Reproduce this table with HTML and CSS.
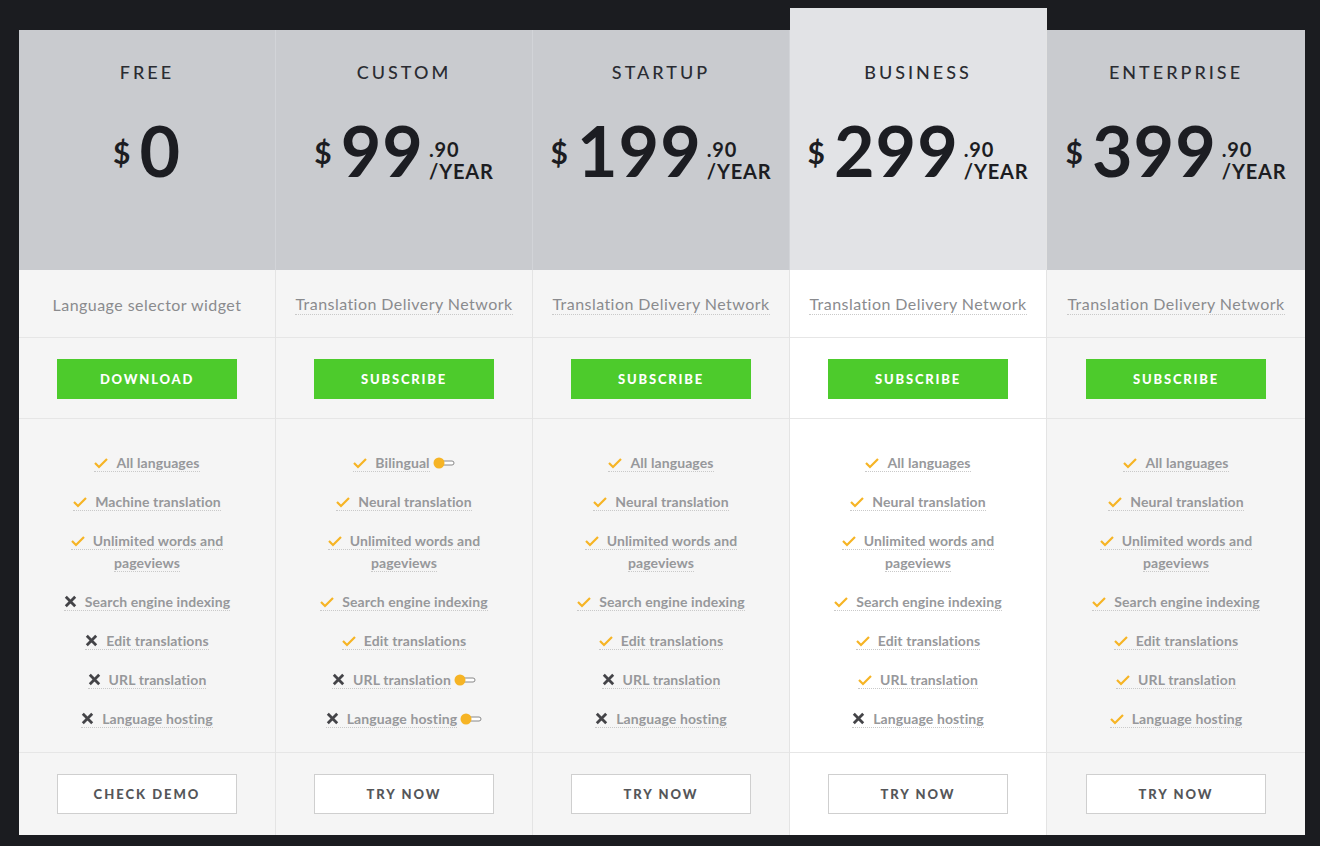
FILE: index.html
```html
<!DOCTYPE html>
<html>
<head>
<meta charset="utf-8">
<link rel="stylesheet" href="styles.css">
</head>
<body>
<div class="pricing">
  <div class="plan">
    <div class="head">
      <div class="name">FREE</div>
      <div class="price"><span class="cur">$</span><span class="amt">0</span></div>
    </div>
    <div class="desc"><span class="plain">Language selector widget</span></div>
    <div class="cta"><a class="btn-green">DOWNLOAD</a></div>
    <ul class="features">
      <li><span class="f"><i class="ok"></i>All languages</span></li>
      <li><span class="f"><i class="ok"></i>Machine translation</span></li>
      <li><span class="f"><i class="ok"></i>Unlimited words and pageviews</span></li>
      <li><span class="f"><i class="no"></i>Search engine indexing</span></li>
      <li><span class="f"><i class="no"></i>Edit translations</span></li>
      <li><span class="f"><i class="no"></i>URL translation</span></li>
      <li><span class="f"><i class="no"></i>Language hosting</span></li>
    </ul>
    <div class="foot"><a class="btn-line">CHECK DEMO</a></div>
  </div>

  <div class="plan">
    <div class="head">
      <div class="name">CUSTOM</div>
      <div class="price"><span class="cur">$</span><span class="amt">99</span><span class="suf"><span>.90</span><span>/YEAR</span></span></div>
    </div>
    <div class="desc"><span class="dl">Translation Delivery Network</span></div>
    <div class="cta"><a class="btn-green">SUBSCRIBE</a></div>
    <ul class="features">
      <li><span class="f"><i class="ok"></i>Bilingual</span><i class="tog"></i></li>
      <li><span class="f"><i class="ok"></i>Neural translation</span></li>
      <li><span class="f"><i class="ok"></i>Unlimited words and pageviews</span></li>
      <li><span class="f"><i class="ok"></i>Search engine indexing</span></li>
      <li><span class="f"><i class="ok"></i>Edit translations</span></li>
      <li><span class="f"><i class="no"></i>URL translation</span><i class="tog"></i></li>
      <li><span class="f"><i class="no"></i>Language hosting</span><i class="tog"></i></li>
    </ul>
    <div class="foot"><a class="btn-line">TRY NOW</a></div>
  </div>

  <div class="plan">
    <div class="head">
      <div class="name">STARTUP</div>
      <div class="price"><span class="cur">$</span><span class="amt">199</span><span class="suf"><span>.90</span><span>/YEAR</span></span></div>
    </div>
    <div class="desc"><span class="dl">Translation Delivery Network</span></div>
    <div class="cta"><a class="btn-green">SUBSCRIBE</a></div>
    <ul class="features">
      <li><span class="f"><i class="ok"></i>All languages</span></li>
      <li><span class="f"><i class="ok"></i>Neural translation</span></li>
      <li><span class="f"><i class="ok"></i>Unlimited words and pageviews</span></li>
      <li><span class="f"><i class="ok"></i>Search engine indexing</span></li>
      <li><span class="f"><i class="ok"></i>Edit translations</span></li>
      <li><span class="f"><i class="no"></i>URL translation</span></li>
      <li><span class="f"><i class="no"></i>Language hosting</span></li>
    </ul>
    <div class="foot"><a class="btn-line">TRY NOW</a></div>
  </div>

  <div class="plan featured">
    <div class="head">
      <div class="name">BUSINESS</div>
      <div class="price"><span class="cur">$</span><span class="amt">299</span><span class="suf"><span>.90</span><span>/YEAR</span></span></div>
    </div>
    <div class="desc"><span class="dl">Translation Delivery Network</span></div>
    <div class="cta"><a class="btn-green">SUBSCRIBE</a></div>
    <ul class="features">
      <li><span class="f"><i class="ok"></i>All languages</span></li>
      <li><span class="f"><i class="ok"></i>Neural translation</span></li>
      <li><span class="f"><i class="ok"></i>Unlimited words and pageviews</span></li>
      <li><span class="f"><i class="ok"></i>Search engine indexing</span></li>
      <li><span class="f"><i class="ok"></i>Edit translations</span></li>
      <li><span class="f"><i class="ok"></i>URL translation</span></li>
      <li><span class="f"><i class="no"></i>Language hosting</span></li>
    </ul>
    <div class="foot"><a class="btn-line">TRY NOW</a></div>
  </div>

  <div class="plan">
    <div class="head">
      <div class="name">ENTERPRISE</div>
      <div class="price"><span class="cur">$</span><span class="amt">399</span><span class="suf"><span>.90</span><span>/YEAR</span></span></div>
    </div>
    <div class="desc"><span class="dl">Translation Delivery Network</span></div>
    <div class="cta"><a class="btn-green">SUBSCRIBE</a></div>
    <ul class="features">
      <li><span class="f"><i class="ok"></i>All languages</span></li>
      <li><span class="f"><i class="ok"></i>Neural translation</span></li>
      <li><span class="f"><i class="ok"></i>Unlimited words and pageviews</span></li>
      <li><span class="f"><i class="ok"></i>Search engine indexing</span></li>
      <li><span class="f"><i class="ok"></i>Edit translations</span></li>
      <li><span class="f"><i class="ok"></i>URL translation</span></li>
      <li><span class="f"><i class="ok"></i>Language hosting</span></li>
    </ul>
    <div class="foot"><a class="btn-line">TRY NOW</a></div>
  </div>
</div>
</body>
</html>
```

FILE: styles.css
```css
* { box-sizing: border-box; }
html, body { margin: 0; padding: 0; }
body {
  background: #1b1c20;
  font-family: Lato, "Open Sans", sans-serif;
  width: 1320px;
  height: 846px;
  overflow: hidden;
}
.pricing {
  margin: 8px 0 0 19px;
  width: 1286px;
  display: grid;
  grid-template-columns: 257px 257px 257px 257px 258px;
  align-items: end;
}
.plan {
  display: flex;
  flex-direction: column;
  background: #f5f5f5;
  border-right: 1px solid #e4e4e4;
}
.plan:last-child { border-right: none; }
.plan.featured { background: #ffffff; }

.head {
  height: 240px;
  background: #c9cbcf;
  display: flex;
  flex-direction: column;
  align-items: center;
  padding-top: 32px;
  margin-right: -1px;
  border-right: 1px solid #d2d4d8;
}
.plan:last-child .head { margin-right: 0; border-right: none; }
.featured .head {
  height: 262px;
  background: #e2e3e6;
  padding-top: 54px;
  border-right: none;
  margin-right: 0;
}
.name {
  font-size: 18px;
  letter-spacing: 3px;
  color: #2a2c32;
  line-height: 20px;
  font-weight: 500;
}
.price {
  display: flex;
  align-items: flex-end;
  margin-top: 38px;
  color: #1c1d22;
}
.cur {
  font-size: 30px;
  font-weight: 700;
  line-height: 1;
  align-self: flex-start;
  margin-top: 17px;
  margin-right: 9px;
}
.amt {
  font-size: 70px;
  font-weight: 700;
  line-height: 60px;
  letter-spacing: 1px;
}
.suf {
  display: flex;
  flex-direction: column;
  font-size: 20px;
  font-weight: 700;
  line-height: 22px;
  letter-spacing: 0.8px;
  margin-left: 5px;
  margin-bottom: -2px;
}

.desc {
  height: 68px;
  display: flex;
  align-items: center;
  justify-content: center;
  border-bottom: 1px solid #e6e6e6;
  font-size: 16px;
  letter-spacing: 0.45px;
  color: #8a8b8e;
  padding-top: 1px;
}
.dl { border-bottom: 1px dotted #c9c9c9; padding-bottom: 1px; }

.cta {
  height: 81px;
  display: flex;
  align-items: center;
  justify-content: center;
  border-bottom: 1px solid #e6e6e6;
  padding-top: 1px;
}
.btn-green {
  width: 180px;
  height: 40px;
  background: #4dcb2c;
  color: #fff;
  font-size: 13px;
  font-weight: 900;
  letter-spacing: 1.8px;
  display: flex;
  align-items: center;
  justify-content: center;
}

.features {
  list-style: none;
  margin: 0;
  padding: 33px 34px 0;
  height: 334px;
  border-bottom: 1px solid #e6e6e6;
  text-align: center;
}
.features li {
  font-size: 14px;
  font-weight: 700;
  letter-spacing: 0.1px;
  color: #97989b;
  line-height: 22px;
  margin-bottom: 17px;
}
.f {
  border-bottom: 1px dotted #c9c9c9;
}
.ok, .no {
  display: inline-block;
  width: 14px;
  height: 12px;
  margin-right: 8px;
  vertical-align: -1px;
  background-repeat: no-repeat;
}
.ok {
  background-image: url("data:image/svg+xml,%3Csvg xmlns='http://www.w3.org/2000/svg' width='14' height='12' viewBox='0 0 14 12'%3E%3Cpolyline points='1,6 5,10 13,2' fill='none' stroke='%23f6b425' stroke-width='2.2'/%3E%3C/svg%3E");
}
.no {
  width: 13px;
  height: 13px;
  background-image: url("data:image/svg+xml,%3Csvg xmlns='http://www.w3.org/2000/svg' width='13' height='13' viewBox='0 0 13 13'%3E%3Cpath d='M1.8 1.8 L11.2 11.2 M11.2 1.8 L1.8 11.2' fill='none' stroke='%23444448' stroke-width='2.8'/%3E%3C/svg%3E");
}
.tog {
  display: inline-block;
  width: 22px;
  height: 12px;
  margin-left: 3px;
  vertical-align: -1px;
  background-image: url("data:image/svg+xml,%3Csvg xmlns='http://www.w3.org/2000/svg' width='22' height='12' viewBox='0 0 22 12'%3E%3Crect x='8' y='4' width='13' height='4' rx='2' fill='%23fff' stroke='%23888' stroke-width='1'/%3E%3Ccircle cx='6' cy='6' r='5.5' fill='%23f6b425'/%3E%3C/svg%3E");
}

.foot {
  height: 82px;
  display: flex;
  justify-content: center;
  padding-top: 21px;
}
.btn-line {
  width: 180px;
  height: 40px;
  border: 1px solid #cfcfcf;
  background: #fff;
  color: #555659;
  font-size: 13px;
  font-weight: 900;
  letter-spacing: 2px;
  display: flex;
  align-items: center;
  justify-content: center;
}
```
